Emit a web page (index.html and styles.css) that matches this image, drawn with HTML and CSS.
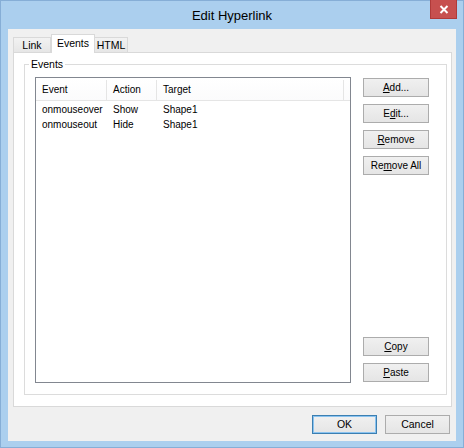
FILE: index.html
```
<!DOCTYPE html>
<html>
<head>
<meta charset="utf-8">
<link rel="stylesheet" href="styles.css">
</head>
<body>
<div class="window">
  <div class="titlebar">
    <div class="title">Edit Hyperlink</div>
    <div class="close">
      <svg width="10" height="9" viewBox="0 0 10 9"><path d="M1.5 1 L8.5 8 M8.5 1 L1.5 8" stroke="#fff" stroke-width="2" fill="none"/></svg>
    </div>
  </div>
  <div class="client">
    <div class="tabs">
      <div class="tab tab-link">Link</div>
      <div class="tab tab-active">Events</div>
      <div class="tab tab-html">HTML</div>
    </div>
    <div class="panel">
      <fieldset class="group">
        <legend class="legend">Events</legend>
        <div class="group-body">
          <div class="listbox">
            <div class="row header">
              <div class="cell c1">Event</div>
              <div class="cell c2">Action</div>
              <div class="cell c3">Target</div>
              <div class="cell c4"></div>
            </div>
            <div class="row item">
              <div class="cell c1">onmouseover</div>
              <div class="cell c2">Show</div>
              <div class="cell c3">Shape1</div>
            </div>
            <div class="row item">
              <div class="cell c1">onmouseout</div>
              <div class="cell c2">Hide</div>
              <div class="cell c3">Shape1</div>
            </div>
          </div>
          <div class="side">
            <div class="btngroup">
              <div class="btn"><u>A</u>dd...</div>
              <div class="btn">E<u>d</u>it...</div>
              <div class="btn"><u>R</u>emove</div>
              <div class="btn">Re<u>m</u>ove All</div>
            </div>
            <div class="btngroup">
              <div class="btn"><u>C</u>opy</div>
              <div class="btn"><u>P</u>aste</div>
            </div>
          </div>
        </div>
      </fieldset>
    </div>
    <div class="footer">
      <div class="btn wide default">OK</div>
      <div class="btn wide">Cancel</div>
    </div>
  </div>
</div>
</body>
</html>
```
FILE: styles.css
```
* { box-sizing: border-box; }
html, body { margin: 0; padding: 0; }
body {
  width: 464px;
  height: 448px;
  font-family: "Liberation Sans", Arial, sans-serif;
  font-size: 10px;
  color: #000;
}
.window {
  width: 464px;
  height: 448px;
  background: #abcfee;
  border: 1px solid #86aed6;
  display: flex;
  flex-direction: column;
}
.titlebar {
  height: 28px;
  display: grid;
  grid-template-columns: 1fr auto 1fr;
  align-items: center;
}
.title {
  grid-column: 2;
  font-size: 13px;
  color: #000;
  line-height: 16px;
  margin-top: 1px;
}
.close {
  grid-column: 3;
  justify-self: end;
  align-self: start;
  margin-top: -1px;
  margin-right: 6px;
  width: 27px;
  height: 19px;
  background: #c7504f;
  border: 1px solid #b03a39;
  border-top: none;
  display: flex;
  align-items: center;
  justify-content: center;
}
.client {
  margin: 0 7px;
  height: 412px;
  background: #f0f0f0;
  padding: 5px 4px 0 5px;
  display: flex;
  flex-direction: column;
}
.tabs {
  height: 18px;
  display: flex;
  align-items: flex-end;
  position: relative;
  z-index: 1;
}
.tab {
  height: 15px;
  border: 1px solid #d9d9d9;
  border-bottom: none;
  background: linear-gradient(#f2f2f2, #e6e6e6);
  text-align: center;
  line-height: 14px;
  font-size: 10.5px;
}
.tab-link { width: 38px; }
.tab-active {
  width: 44px;
  height: 19px;
  margin-bottom: -1px;
  background: #fff;
  line-height: 16px;
}
.tab-html { width: 34px; margin-left: -1px; }
.panel {
  height: 355px;
  background: #fff;
  border: 1px solid #d9d9d9;
  padding: 5px 4px 11px 10px;
  display: flex;
  flex-direction: column;
}
.group {
  flex: 1;
  margin: 0;
  min-width: 0;
  border: 1px solid #dcdcdc;
  padding: 7px 18px 10px 10px;
}
.legend {
  padding: 0 2px;
  margin-left: -6px;
  line-height: 12px;
  font-size: 10.5px;
}
.group-body {
  height: 306px;
  display: flex;
}
.listbox {
  flex: 1;
  border: 1px solid #828790;
  background: #fff;
}
.row { display: flex; }
.header {
  height: 23px;
  border-bottom: 1px solid #e5e5e5;
  background: linear-gradient(#fff, #fbfbfc);
}
.header .cell {
  border-right: 1px solid #e5e5e5;
  margin-top: 2px;
  line-height: 20px;
}
.item { height: 15px; line-height: 15px; }
.cell { padding-left: 6px; white-space: nowrap; font-size: 10px; }
.c1 { width: 71px; }
.c2 { width: 50px; }
.c3 { width: 187px; }
.c4 { flex: 1; border-right: none !important; }
.header + .item { margin-top: 1px; }
.side {
  width: 66px;
  margin-left: 12px;
  padding: 1px 0;
  display: flex;
  flex-direction: column;
  justify-content: space-between;
}
.btngroup {
  display: flex;
  flex-direction: column;
  gap: 7px;
}
.btn {
  height: 19px;
  width: 66px;
  border: 1px solid #acacac;
  background: linear-gradient(#f0f0f0, #e5e5e5);
  text-align: center;
  line-height: 17px;
  font-size: 10px;
}
.btn u { text-decoration-thickness: 1px; text-underline-offset: 1px; }
.footer {
  display: flex;
  justify-content: flex-end;
  gap: 8px;
  padding: 8px 2px 0 0;
}
.wide { width: 65px; font-size: 10.5px; }
.default { border-color: #3c7fb1; box-shadow: inset 0 0 0 1px #8ac3f0; }
```
